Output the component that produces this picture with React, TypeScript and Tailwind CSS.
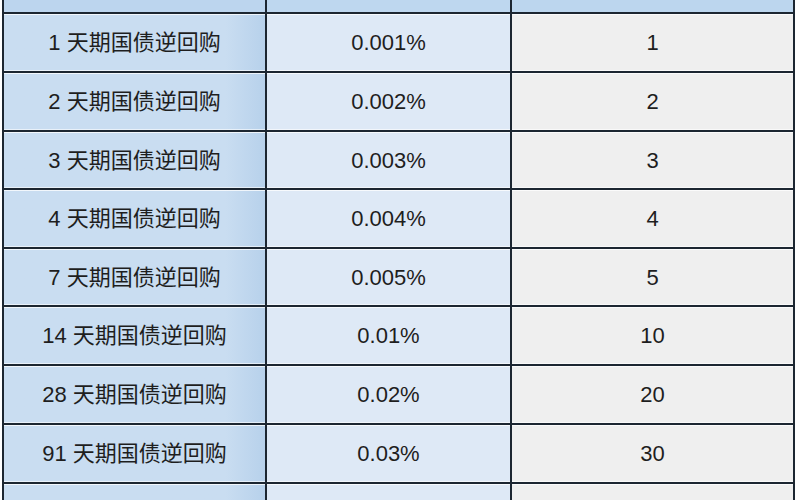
const rows = [
  { name: "1 天期国债逆回购", rate: "0.001%", min: "1", h: "h-[59px]" },
  { name: "2 天期国债逆回购", rate: "0.002%", min: "2", h: "h-[59px]" },
  { name: "3 天期国债逆回购", rate: "0.003%", min: "3", h: "h-[58px]" },
  { name: "4 天期国债逆回购", rate: "0.004%", min: "4", h: "h-[59px]" },
  { name: "7 天期国债逆回购", rate: "0.005%", min: "5", h: "h-[58px]" },
  { name: "14 天期国债逆回购", rate: "0.01%", min: "10", h: "h-[59px]" },
  { name: "28 天期国债逆回购", rate: "0.02%", min: "20", h: "h-[59px]" },
  { name: "91 天期国债逆回购", rate: "0.03%", min: "30", h: "h-[59px]" },
];

const cell =
  "flex items-center justify-center border-r-2 border-[#1c2631] shadow-[inset_0_1px_0_rgba(255,255,255,0.75),inset_0_-1px_0_rgba(255,255,255,0.6)]";

const first = "w-[263px] bg-linear-to-r from-[#c9ddf1] from-85% to-[#b7d1eb]";

function Row({ name, rate, min, h }: { name: string; rate: string; min: string; h: string }) {
  return (
    <div className={`flex border-b-2 border-[#1c2631] ${h}`}>
      <div className={`${cell} ${first}`}>{name}</div>
      <div className={`${cell} w-[245px] bg-[#dee9f6]`}>{rate}</div>
      <div className={`${cell} w-[283px] bg-[#efefef]`}>{min}</div>
    </div>
  );
}

export default function App() {
  return (
    <div className="h-[500px] w-[800px] overflow-hidden bg-white">
      <div
        className="ml-[2px] w-[793px] border-l-2 border-[#1c2631] text-[22px] text-[#1e1e1e]"
        style={{ fontFamily: '"Liberation Sans", "Noto Sans CJK SC", sans-serif' }}
      >
        <div className="flex h-[14px] border-b-2 border-[#1c2631]">
          <div className="w-[263px] border-r-2 border-[#1c2631] bg-[#bcd5ee]" />
          <div className="w-[245px] border-r-2 border-[#1c2631] bg-[#bed7ef]" />
          <div className="w-[283px] border-r-2 border-[#1c2631] bg-[#bcd6ee]" />
        </div>
        {rows.map((r) => (
          <Row key={r.name} {...r} />
        ))}
        <div className="flex h-[40px]">
          <div className={`${cell} ${first}`} />
          <div className={`${cell} w-[245px] bg-[#dee9f6]`} />
          <div className={`${cell} w-[283px] bg-[#efefef]`} />
        </div>
      </div>
    </div>
  );
}
